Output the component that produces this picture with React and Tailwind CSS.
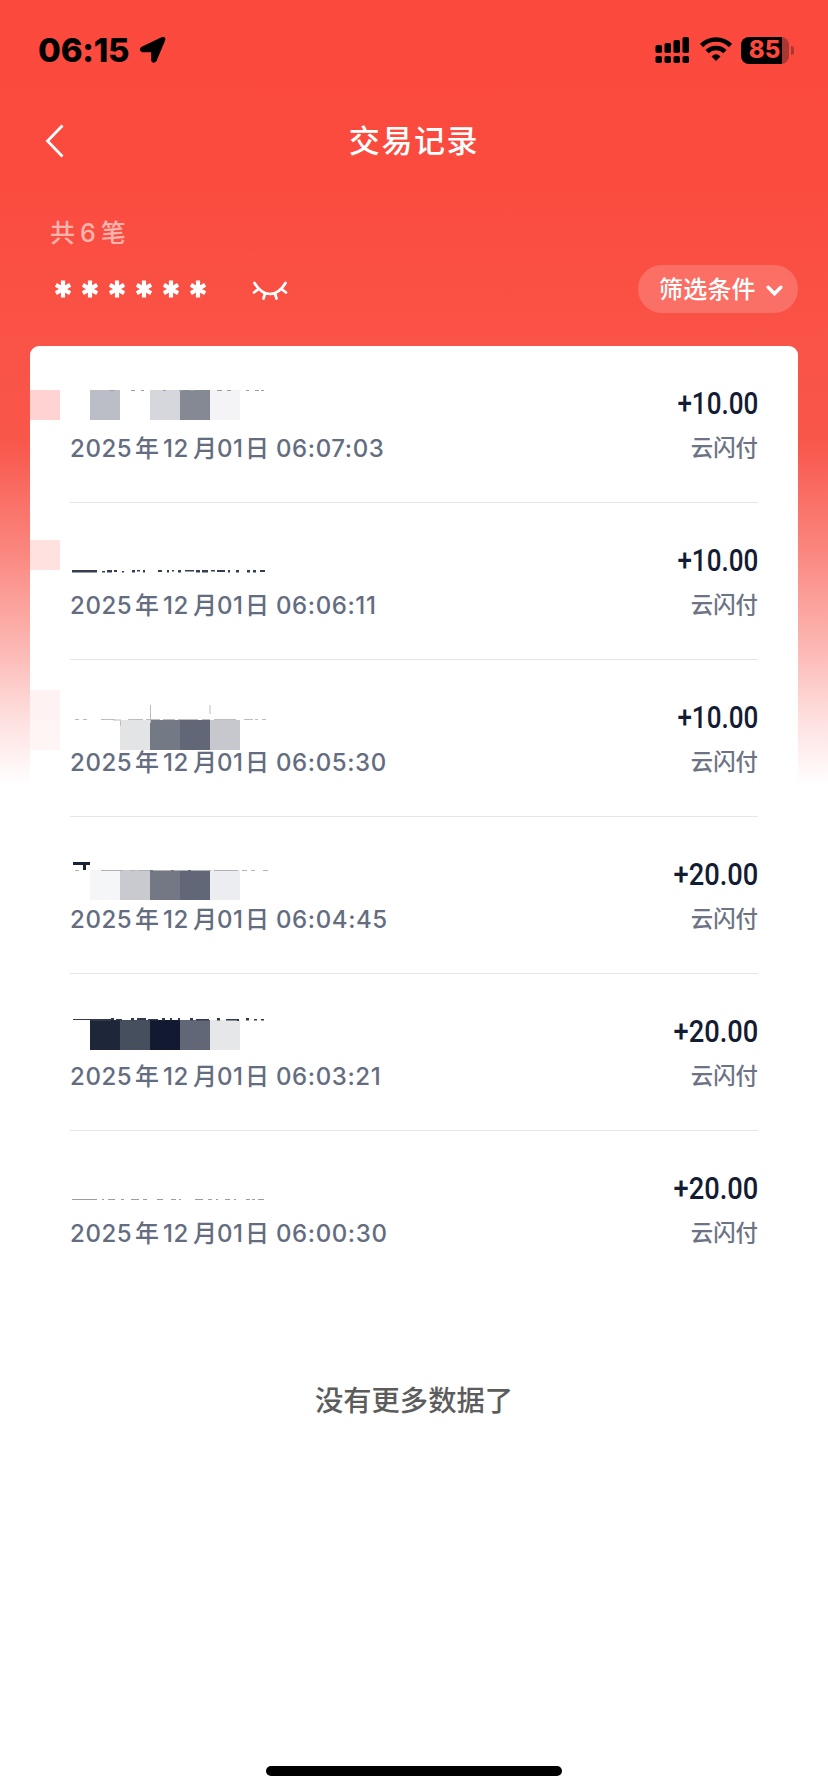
import React from "react";

const NUM = "font-[Inter,'Noto_Sans_CJK_SC',sans-serif]";

// mosaic and mark coordinates are relative to the top left corner of the row
const records = [
    {
        time: "06:07:03",
        amount: "+10.00",
        blocks: [
            [0, 44, 30, 30, "#ffd3d2"],
            [60, 44, 30, 30, "#bbbec7"],
            [120, 44, 30, 30, "#d6d7dc"],
            [150, 44, 30, 30, "#858994"],
            [180, 44, 30, 30, "#f4f4f7"],
        ],
        marks: [
            [80, 44, 4, 1],
            [101, 44, 4, 1],
            [111, 44, 3, 1],
            [133, 44, 3, 1],
            [149, 44, 4, 1],
            [160, 44, 4, 1],
            [187, 44, 5, 1],
            [197, 44, 4, 1],
            [216, 44, 3, 1],
            [225, 44, 4, 1],
            [231, 44, 3, 1],
        ],
        ink: "#9a9ea6",
    },
    {
        time: "06:06:11",
        amount: "+10.00",
        blocks: [[0, 37, 30, 30, "#ffe1e0"]],
        marks: [
            [42, 67, 25, 2.5],
            [72, 68, 3, 1.5],
            [77, 67, 5, 2.5],
            [84, 67, 3, 2],
            [92, 68, 2, 1.5],
            [102, 67, 3, 2.5],
            [107, 67, 3, 1.5],
            [113, 67, 2, 2.5],
            [128, 67, 4, 2],
            [137, 67, 2, 2.5],
            [142, 67, 2, 1.5],
            [148, 67, 3, 2.5],
            [155, 67, 9, 1.5],
            [166, 67, 4, 2.5],
            [172, 67, 6, 2.5],
            [181, 67, 4, 1.5],
            [187, 67, 8, 2],
            [198, 67, 2, 2.5],
            [206, 67, 3, 2.5],
            [217, 67, 3, 2.5],
            [223, 67, 3, 2.5],
            [230, 67, 5, 2],
        ],
        ink: "#353e50",
    },
    {
        time: "06:05:30",
        amount: "+10.00",
        blocks: [
            [0, 30, 30, 30, "#fff2f2"],
            [0, 60, 30, 30, "#fff5f5"],
            [90, 60, 30, 30, "#e3e4e6"],
            [120, 60, 30, 30, "#737985"],
            [150, 60, 30, 30, "#626777"],
            [180, 60, 30, 30, "#c7c8ce"],
        ],
        marks: [
            [45, 59, 4, 1],
            [53, 59, 4, 1],
            [71, 59, 14, 1],
            [83, 59.5, 8, 1],
            [98, 59, 15, 1],
            [116, 59, 14, 1],
            [133, 59, 12, 1],
            [148, 59, 20, 1],
            [172, 59, 8, 1],
            [184, 59, 22, 1],
            [214, 59, 9, 1],
            [225, 59, 3, 1],
            [232, 59, 4, 1],
            [90, 61, 1, 5],
            [120, 45, 1, 18],
            [179.5, 45, 1, 9],
        ],
        ink: "#bbbdc0",
    },
    {
        time: "06:04:45",
        amount: "+20.00",
        blocks: [
            [60, 53, 30, 30, "#f5f6f8"],
            [90, 53, 30, 30, "#c8cad0"],
            [120, 53, 30, 30, "#737884"],
            [150, 53, 30, 30, "#626777"],
            [180, 53, 30, 30, "#ecedf0"],
        ],
        marks: [
            [45, 53, 4, 1],
            [71, 53, 22, 1],
            [100, 53, 5, 1],
            [108, 53, 12, 1],
            [123, 53, 18, 1],
            [144, 53, 14, 1],
            [161, 53, 20, 1],
            [184, 53, 24, 1],
            [212, 53, 5, 1],
            [221, 53, 4, 1],
            [233, 53, 5, 1],
        ],
        ink: "#b0b2b6",
        glyph: true,
    },
    {
        time: "06:03:21",
        amount: "+20.00",
        blocks: [
            [60, 46, 30, 30, "#1e263a"],
            [90, 46, 30, 30, "#464f5e"],
            [120, 46, 30, 30, "#111a31"],
            [150, 46, 30, 30, "#626777"],
            [180, 46, 30, 30, "#e6e7e9"],
        ],
        marks: [
            [43, 45, 20, 1],
            [61, 45, 20, 2],
            [81, 44, 3, 2],
            [86, 45, 6, 1.5],
            [101, 44, 3, 2.5],
            [107, 44, 9, 2],
            [118, 45, 10, 1.5],
            [132, 44, 3, 2.5],
            [140, 44, 2, 2.5],
            [148, 44, 2, 2.5],
            [160, 44, 3, 2.5],
            [166, 45, 13, 1.5],
            [187, 44, 3, 2.5],
            [196, 45, 12, 1.5],
            [207, 45, 2, 2],
            [216, 44, 3, 2.5],
            [224, 45, 3, 1.5],
            [231, 45, 3, 1.5],
        ],
        ink: "#323a4a",
    },
    {
        time: "06:00:30",
        amount: "+20.00",
        blocks: [],
        marks: [
            [42, 68, 25, 1],
            [72, 68, 2, 1],
            [78, 68, 7, 1],
            [91, 68, 3, 1],
            [101, 68, 8, 1],
            [113, 68, 4, 1],
            [127, 68, 6, 1],
            [141, 68, 5, 1],
            [149, 68, 2, 1],
            [165, 68, 8, 1],
            [178, 68, 4, 1],
            [186, 68, 2, 1],
            [195, 68, 5, 1],
            [204, 68, 2, 1],
            [216, 68, 4, 1],
            [222, 68, 3, 1],
            [228, 68, 6, 1],
        ],
        ink: "#9a9ca1",
    },
];

function StatusBar() {
    return (
        <div className="flex h-[100px] items-center justify-between pr-[34px] pl-[38px]">
            <div className="flex items-center gap-[8px]">
                <span className="w-[93px] font-[Inter,sans-serif] text-[33px] leading-none font-extrabold tracking-[-0.2px] text-black">
                    06:15
                </span>
                <svg width="28" height="28" viewBox="0 0 28 28">
                    <path
                        d="M2.6 12 L23.5 2 Q26 1.4 25.2 4 L16.6 24.6 Q14.8 26.8 13.2 24.6 V15.2 H3.6 Q0.6 14 2.6 12 Z"
                        stroke="#000"
                        strokeWidth="2"
                        strokeLinejoin="round"
                    />
                </svg>
            </div>
            <div className="flex items-center">
                <svg width="34" height="28" viewBox="0 0 34 28">
                    <rect x="0.5" y="9" width="6.5" height="8" rx="1.8" />
                    <rect x="9.5" y="7" width="6.5" height="10" rx="1.8" />
                    <rect x="18.5" y="4" width="6.5" height="13" rx="1.8" />
                    <rect x="27.5" y="1" width="6.5" height="16" rx="1.8" />
                    <rect x="0.5" y="20" width="6.5" height="7" rx="1.8" />
                    <rect x="9.5" y="20" width="6.5" height="7" rx="1.8" />
                    <rect x="18.5" y="20" width="6.5" height="7" rx="1.8" />
                    <rect x="27.5" y="20" width="6.5" height="7" rx="1.8" />
                </svg>
                <svg
                    className="ml-[11px]"
                    width="32"
                    height="28"
                    viewBox="0 0 32 28"
                    fill="none"
                    stroke="#000"
                    strokeWidth="4.6"
                >
                    <path d="M1.5 9.5 A20.5 20.5 0 0 1 30.5 9.5" />
                    <path d="M7 15.7 A12.7 12.7 0 0 1 25 15.7" />
                    <path
                        d="M16 25 L11.5 20.5 Q16 16.2 20.5 20.5 Z"
                        fill="#000"
                        stroke="none"
                    />
                </svg>
                <div className="ml-[9px] flex h-[27px] w-12 items-center justify-center overflow-hidden rounded-[8px] bg-[linear-gradient(to_right,#000_0_41px,#a83832_41px)]">
                    <span className="-ml-px font-[Inter,sans-serif] text-[24px] leading-none font-extrabold text-[#fb4a3d]">
                        85
                    </span>
                </div>
                <div className="ml-[2px] h-[9px] w-[3px] rounded-r-full bg-[#a83832]" />
            </div>
        </div>
    );
}

function Header() {
    return (
        <div className="grid h-[82px] grid-cols-[100px_1fr_100px] items-center">
            <svg
                className="ml-[45px]"
                width="20"
                height="34"
                viewBox="0 0 20 34"
                fill="none"
                stroke="#fff"
                strokeWidth="2.8"
            >
                <path d="M17.5 1.5 L2.5 17 L17.5 32.5" />
            </svg>
            <h1 className="pb-[5px] text-center text-[31px] leading-none font-medium tracking-[1.6px] text-white">
                交易记录
            </h1>
        </div>
    );
}

function Summary() {
    return (
        <div className="h-[164px] pr-[30px] pl-[50px]">
            <div className="flex h-[100px] flex-col justify-start pt-[38px]">
                <p
                    className={`${NUM} flex gap-[5px] text-[25px] leading-[26px] font-medium text-[#ffb5ae]`}
                >
                    <span>共</span>
                    <span>6</span>
                    <span>笔</span>
                </p>
            </div>
            <div className="-mt-[17px] flex h-12 items-center justify-between">
                <div className="flex items-center">
                    <div className="ml-[5px] flex gap-[11px]">
                        {Array.from({ length: 6 }, (_, i) => (
                            <svg
                                key={i}
                                width="16"
                                height="18"
                                viewBox="0 0 16 18"
                                stroke="#fff"
                                strokeWidth="4.2"
                            >
                                <path d="M8 0.4 V17.6 M0.8 4.8 L15.2 13.2 M15.2 4.8 L0.8 13.2" />
                            </svg>
                        ))}
                    </div>
                    <svg
                        className="mt-[4px] ml-[46px]"
                        width="36"
                        height="20"
                        viewBox="0 0 36 20"
                        fill="none"
                        stroke="#fff"
                        strokeWidth="2.7"
                        strokeLinecap="round"
                    >
                        <path d="M2.5 2 Q9 13 18 13 Q27 13 33.5 2" />
                        <path d="M6.5 8 L2 11.5 M29.5 8 L34 11.5 M13 12.5 L11.5 17.5 M23 12.5 L24.5 17.5" />
                    </svg>
                </div>
                <button
                    type="button"
                    className="flex h-12 w-40 items-center rounded-full bg-white/18 pb-[2px] pl-[21px] text-[24px] leading-none font-medium tracking-[0.2px] text-white"
                >
                    筛选条件
                    <svg
                        className="mt-[6px] ml-[10px]"
                        width="17"
                        height="12"
                        viewBox="0 0 17 12"
                        fill="none"
                        stroke="#fff"
                        strokeWidth="3.4"
                        strokeLinecap="round"
                    >
                        <path d="M2.2 2.3 L8.5 8.8 L14.8 2.3" />
                    </svg>
                </button>
            </div>
        </div>
    );
}

function Mosaic({ blocks, marks, ink, glyph }) {
    return (
        <svg
            className="absolute top-0 left-0"
            width="300"
            height="100"
            viewBox="0 0 300 100"
        >
            {blocks.map(([x, y, w, h, fill]) => (
                <rect
                    key={`${x}-${y}`}
                    x={x}
                    y={y}
                    width={w}
                    height={h}
                    fill={fill}
                />
            ))}
            {marks.map(([x, y, w, h]) => (
                <rect
                    key={`${x}-${y}`}
                    x={x}
                    y={y}
                    width={w}
                    height={h}
                    fill={ink}
                />
            ))}
            {glyph && <path d="M43 45 H60 V48 H56 V53 H53 V48 H43 Z" fill="#1a2236" />}
        </svg>
    );
}

function Record({ record, last }) {
    return (
        <li className="relative h-[157px] px-10">
            <Mosaic {...record} />
            <div
                className={`flex h-full items-start justify-between border-b ${
                    last ? "border-transparent" : "border-[#e5e6e9]"
                }`}
            >
                <p
                    className={`${NUM} mt-[89px] text-[24px] leading-[28px] font-medium tracking-[0.6px] whitespace-pre text-[#646c7f]`}
                >
                    <span className="inline-block w-[65px]">2025</span>
                    <span className="inline-block w-[28px]">年</span>
                    <span className="inline-block w-[30px]">12</span>
                    <span className="inline-block w-[24px]">月</span>
                    <span className="inline-block w-[28px]">01</span>
                    <span className="inline-block w-[31px]">日</span>
                    {record.time}
                </p>
                <div className="flex flex-col items-end">
                    <span
                        className={`mt-[42px] origin-right font-[Roboto,sans-serif] text-[31px] leading-[32px] font-medium text-[#141c33] ${
                            record.amount.startsWith("+1")
                                ? "scale-x-[0.84]"
                                : "scale-x-[0.88]"
                        }`}
                    >
                        {record.amount}
                    </span>
                    <span className="mt-[12px] text-[22.4px] leading-[28px] font-medium text-[#6c7385]">
                        云闪付
                    </span>
                </div>
            </div>
        </li>
    );
}

function App() {
    return (
        <div className="flex h-[1792px] w-[828px] flex-col bg-white bg-[linear-gradient(to_bottom,#fb493d_0px,#fb4a3e_160px,#fa5347_345px,#f9564a_440px,#fa8179_540px,#fcb3af_640px,#fee0df_720px,#ffffff_785px)] font-['Noto_Sans_CJK_SC',sans-serif]">
            <StatusBar />
            <Header />
            <Summary />
            <ul className="mx-[30px] rounded-[9px] bg-white">
                {records.map((record, i) => (
                    <Record
                        key={record.time}
                        record={record}
                        last={i === records.length - 1}
                    />
                ))}
            </ul>
            <p className="mt-[93px] text-center text-[28.3px] leading-[36px] font-medium text-[#5c5c5c]">
                没有更多数据了
            </p>
            <div className="mx-auto mt-auto mb-4 h-[10px] w-[296px] rounded-full bg-black" />
        </div>
    );
}

export default App;
